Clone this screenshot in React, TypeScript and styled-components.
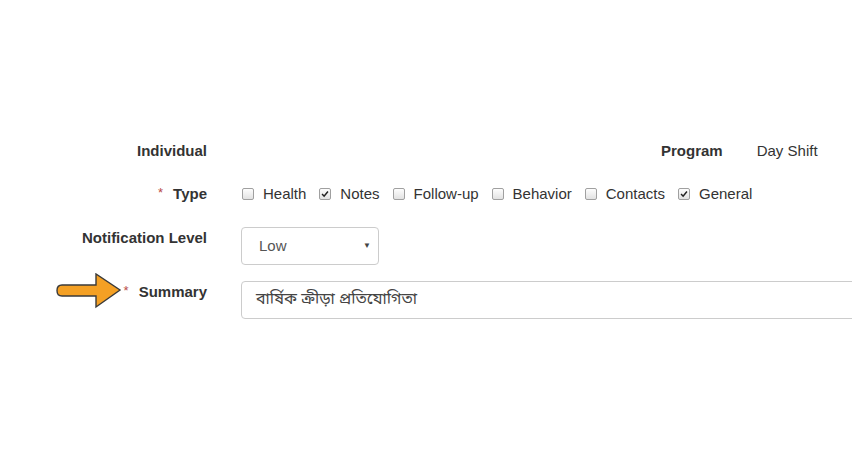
import React from "react";
import styled, { createGlobalStyle } from "styled-components";

const GlobalStyle = createGlobalStyle`
  html, body {
    margin: 0;
    padding: 0;
    background: #ffffff;
    overflow: hidden;
  }
  body {
    font-family: "Liberation Sans", Arial, Helvetica, sans-serif;
    color: #333333;
  }
`;

const FormWrapper = styled.div`
  width: 852px;
  height: 450px;
  padding-top: 141px;
  box-sizing: border-box;
  overflow: hidden;
`;

const Row = styled.div<{ $top: number }>`
  display: grid;
  grid-template-columns: 207px 1fr;
  column-gap: 34px;
  align-items: start;
  margin-top: ${(p) => p.$top}px;
`;

const Label = styled.div<{ $pad?: number }>`
  position: relative;
  text-align: right;
  font-size: 15px;
  font-weight: bold;
  line-height: 20px;
  color: #333333;
  padding-top: ${(p) => p.$pad ?? 0}px;
  white-space: nowrap;
`;

const Required = styled.span`
  color: #b94a48;
  font-weight: normal;
  font-size: 13px;
  margin-right: 10px;
  position: relative;
  top: -2px;
`;

const Content = styled.div`
  display: flex;
  align-items: center;
  min-height: 20px;
  font-size: 15px;
  line-height: 20px;
`;

const ProgramPair = styled.div`
  display: flex;
  gap: 34px;
  padding-left: 420px;
`;

const ProgramLabel = styled.span`
  font-weight: bold;
`;

const CheckGroup = styled.div`
  display: flex;
  align-items: center;
  gap: 12px;
`;

const CheckItem = styled.label`
  display: flex;
  align-items: center;
  gap: 10px;
  color: #333333;
`;

const Box = styled.span`
  width: 10px;
  height: 10px;
  margin-left: 1px;
  margin-right: -1px;
  border: 1px solid #a0a0a0;
  border-radius: 2px;
  background: linear-gradient(#fdfdfd, #e2e2e2);
  display: flex;
  align-items: center;
  justify-content: center;
  box-sizing: content-box;
`;

const Select = styled.div`
  width: 138px;
  height: 38px;
  box-sizing: border-box;
  border: 1px solid #cccccc;
  border-radius: 4px;
  display: flex;
  align-items: center;
  justify-content: space-between;
  padding: 0 7px 0 17px;
  font-size: 15px;
  color: #555555;
`;

const Caret = styled.span`
  font-size: 8px;
  color: #444444;
`;

const TextInput = styled.div`
  width: 660px;
  height: 38px;
  box-sizing: border-box;
  border: 1px solid #cccccc;
  border-radius: 4px;
  display: flex;
  align-items: center;
  padding-left: 14px;
  font-family: "Noto Sans Bengali", "Noto Serif Bengali", "Lohit Bengali", "Liberation Sans", sans-serif;
  font-size: 16px;
  color: #444444;
`;

const Pointer = styled.svg`
  position: absolute;
  left: 56px;
  top: -8px;
`;

const Check = () => (
  <svg width="8" height="8" viewBox="0 0 9 9">
    <path d="M1.2 4.6 L3.5 7 L7.8 1.6" fill="none" stroke="#222" strokeWidth="1.7" />
  </svg>
);

const types = [
  { name: "Health", checked: false },
  { name: "Notes", checked: true },
  { name: "Follow-up", checked: false },
  { name: "Behavior", checked: false },
  { name: "Contacts", checked: false },
  { name: "General", checked: true },
];

const App: React.FC = () => {
  return (
    <>
      <GlobalStyle />
      <FormWrapper>
        <Row $top={0}>
          <Label>Individual</Label>
          <Content>
            <ProgramPair>
              <ProgramLabel>Program</ProgramLabel>
              <span>Day Shift</span>
            </ProgramPair>
          </Content>
        </Row>
        <Row $top={23}>
          <Label>
            <Required>*</Required>Type
          </Label>
          <Content>
            <CheckGroup>
              {types.map((t) => (
                <CheckItem key={t.name}>
                  <Box>{t.checked && <Check />}</Box>
                  {t.name}
                </CheckItem>
              ))}
            </CheckGroup>
          </Content>
        </Row>
        <Row $top={22}>
          <Label $pad={1}>Notification Level</Label>
          <Content>
            <Select>
              Low
              <Caret>▼</Caret>
            </Select>
          </Content>
        </Row>
        <Row $top={16}>
          <Label $pad={1}>
            <Pointer width="66" height="36" viewBox="0 0 66 36">
              <path
                d="M6 12 L40 12 L40 1 L64 17 L40 34 L40 23 L6 23 Q1 23 1 17.5 Q1 12 6 12 Z"
                fill="#f4a024"
                stroke="#3a3a3a"
                strokeWidth="1.4"
                strokeLinejoin="miter"
              />
            </Pointer>
            <Required>*</Required>Summary
          </Label>
          <Content>
            <TextInput>বার্ষিক ক্রীড়া প্রতিযোগিতা</TextInput>
          </Content>
        </Row>
      </FormWrapper>
    </>
  );
};

export default App;
